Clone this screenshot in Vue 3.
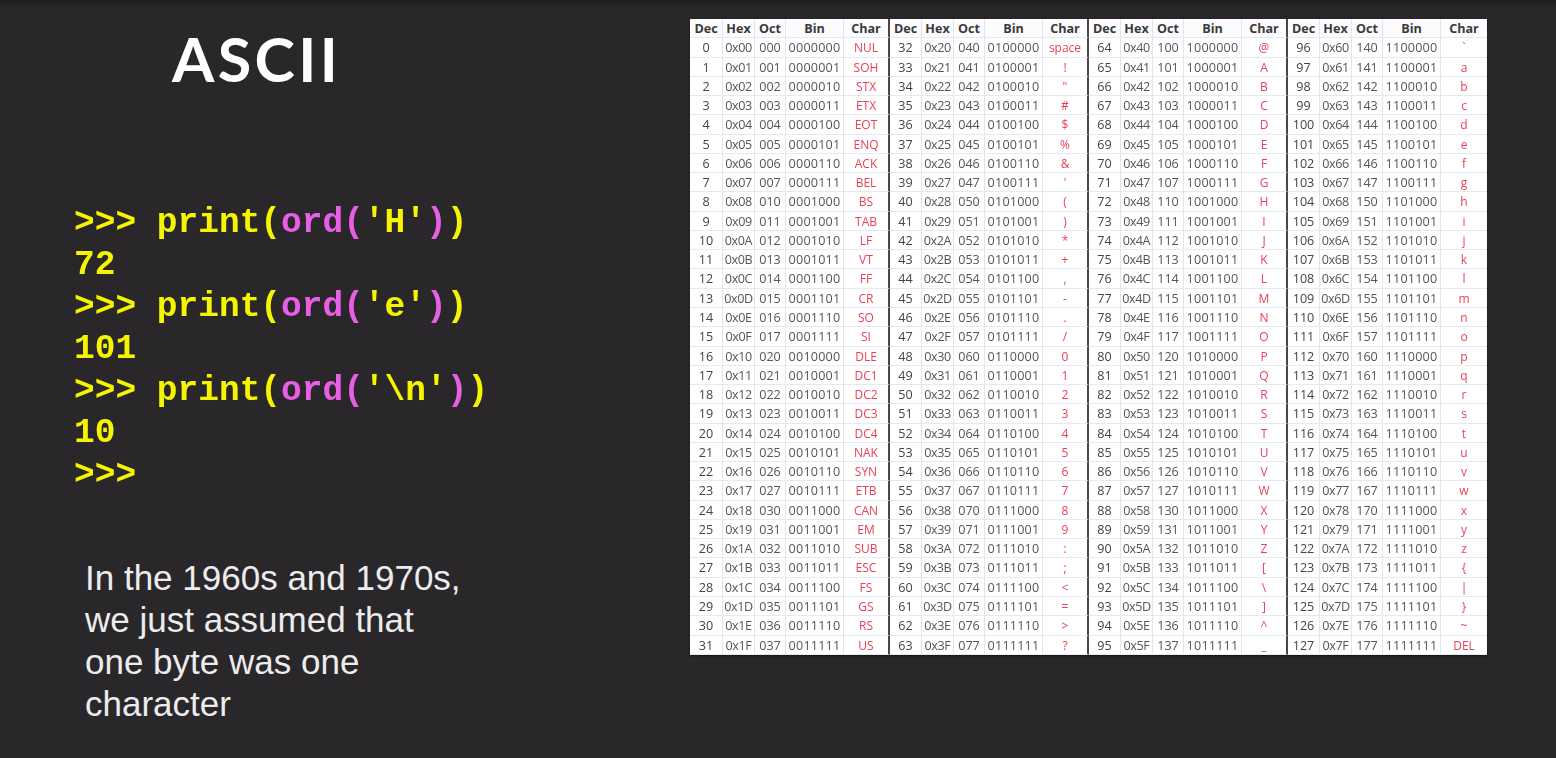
<script setup>
const ctrl = ['NUL','SOH','STX','ETX','EOT','ENQ','ACK','BEL','BS','TAB','LF','VT','FF','CR','SO','SI','DLE','DC1','DC2','DC3','DC4','NAK','SYN','ETB','CAN','EM','SUB','ESC','FS','GS','RS','US']
const label = (n) => n < 32 ? ctrl[n] : n === 32 ? 'space' : n === 127 ? 'DEL' : String.fromCharCode(n)
const heads = ['Dec', 'Hex', 'Oct', 'Bin', 'Char']
const cells = []
for (let g = 0; g < 4; g++) heads.forEach((h, i) => cells.push({ t: h, c: i === 4 ? 'head end' : 'head' }))
for (let r = 0; r < 32; r++) {
  for (let g = 0; g < 4; g++) {
    const n = g * 32 + r
    cells.push({ t: String(n), c: 'dec' })
    cells.push({ t: '0x' + n.toString(16).toUpperCase().padStart(2, '0'), c: 'num hex' })
    cells.push({ t: n.toString(8).padStart(3, '0'), c: 'num' })
    cells.push({ t: n.toString(2).padStart(7, '0'), c: 'num bin' })
    cells.push({ t: label(n), c: 'chr end' })
  }
}
const code = [
  [['>>> print(', 'y'], ['ord(', 'm'], ["'H'", 'y'], [')', 'm'], [')', 'y']],
  [['72', 'y']],
  [['>>> print(', 'y'], ['ord(', 'm'], ["'e'", 'y'], [')', 'm'], [')', 'y']],
  [['101', 'y']],
  [['>>> print(', 'y'], ['ord(', 'm'], ["'\\n'", 'y'], [')', 'm'], [')', 'y']],
  [['10', 'y']],
  [['>>>', 'y']],
]
const lines = ['In the 1960s and 1970s,', 'we just assumed that', 'one byte was one', 'character']
</script>

<template>
  <div class="slide">
    <section class="left">
      <h1 class="title">ASCII</h1>
      <div class="code">
        <div v-for="(l, i) in code" :key="i" class="code-line">
          <span v-for="(s, j) in l" :key="j" :class="s[1]">{{ s[0] }}</span>
        </div>
      </div>
      <div class="note">
        <div v-for="l in lines" :key="l">{{ l }}</div>
      </div>
    </section>
    <section class="right">
      <div class="table">
        <div v-for="(c, i) in cells" :key="i" class="cell" :class="c.c">{{ c.t }}</div>
      </div>
    </section>
  </div>
</template>

<style>
html, body { margin: 0; background: #2a272b; }
</style>

<style scoped>
.slide {
  width: 1556px;
  height: 758px;
  display: flex;
  overflow: hidden;
  background: linear-gradient(#1f1c20 0, #2a272b 10px);
}
.left { width: 690px; flex: none; }
.title {
  margin: 23px 0 0 172px;
  font: 700 61px/72px Lato, sans-serif;
  color: #fff;
  letter-spacing: 3.4px;
}
.code {
  margin-top: 107px;
  margin-left: 74px;
  font: 700 34.5px/42px "Liberation Mono", monospace;
  white-space: pre;
  filter: blur(0.4px);
}
.code-line { height: 42px; }
.y { color: #f5f500; }
.m { color: #e85fe6; }
.note {
  margin-top: 61px;
  margin-left: 85px;
  font: 400 35px/42px "Liberation Sans", sans-serif;
  color: #ececec;
}
.right { flex: 1; padding-top: 19px; }
.table {
  width: 797px;
  display: grid;
  grid-template-columns: 33px 32px 31px 58px 46px repeat(3, 32px 32px 31px 58px 46px);
  grid-auto-rows: 19.27px;
  background: #fff;
  font: 400 12.6px/19px "Open Sans", sans-serif;
  color: #555;
  filter: blur(0.35px);
  box-shadow: 0 1px 2px #151315;
}
.cell {
  text-align: center;
  border-right: 1px solid #dfe5f2;
  border-bottom: 1px solid #e4e9f4;
  box-sizing: border-box;
  white-space: nowrap;
  overflow: hidden;
}
.head { font-weight: 700; color: #3a3a3a; background: #fcfcfe; }
.dec { color: #444; }
.hex { letter-spacing: -0.4px; }
.bin { letter-spacing: 0.2px; }
.chr { color: #ea4058; font-size: 12px; }
.end { border-right: 2px solid #48484a; }
.cell:nth-child(20n) { border-right: 0; }
</style>
